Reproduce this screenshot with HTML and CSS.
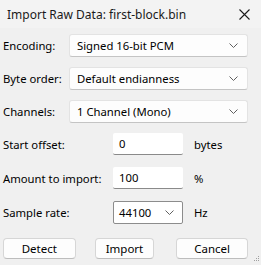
FILE: index.html
```html
<!doctype html>
<html>
  <head>
    <meta name="viewport" content="width=device-width, initial-scale=1.0" />
    <title>Import Raw Data</title>
    <link rel="stylesheet" href="styles.css">
  </head>
  <body>
    <div class="titlebar">
      <span class="title">Import Raw Data: first-block.bin</span>
      <svg class="close" width="11" height="11" viewBox="0 0 11 11">
        <path d="M0.5 0.5 L10.5 10.5 M10.5 0.5 L0.5 10.5" stroke="#1a1a1a" stroke-width="1.1" fill="none" />
      </svg>
    </div>

    <div class="content">
      <div class="row combo-row">
        <label class="label">Encoding:</label>
        <div class="combo">
          <span>Signed 16-bit PCM</span>
          <svg class="chev" width="9" height="5" viewBox="0 0 9 5"><path d="M0.5 0.5 L4.5 4.5 L8.5 0.5" stroke="#606060" fill="none" /></svg>
        </div>
      </div>
      <div class="row combo-row">
        <label class="label">Byte order:</label>
        <div class="combo">
          <span>Default endianness</span>
          <svg class="chev" width="9" height="5" viewBox="0 0 9 5"><path d="M0.5 0.5 L4.5 4.5 L8.5 0.5" stroke="#606060" fill="none" /></svg>
        </div>
      </div>
      <div class="row combo-row">
        <label class="label">Channels:</label>
        <div class="combo">
          <span>1 Channel (Mono)</span>
          <svg class="chev" width="9" height="5" viewBox="0 0 9 5"><path d="M0.5 0.5 L4.5 4.5 L8.5 0.5" stroke="#606060" fill="none" /></svg>
        </div>
      </div>

      <div class="row field-row">
        <label class="label wide">Start offset:</label>
        <div class="edit">0</div>
        <span class="unit">bytes</span>
      </div>
      <div class="row field-row">
        <label class="label wide">Amount to import:</label>
        <div class="edit">100</div>
        <span class="unit">%</span>
      </div>
      <div class="row field-row rate-row">
        <label class="label wide">Sample rate:</label>
        <div class="edit rate">
          <span>44100</span>
          <svg class="chev" width="9" height="5" viewBox="0 0 9 5"><path d="M0.5 0.5 L4.5 4.5 L8.5 0.5" stroke="#606060" fill="none" /></svg>
        </div>
        <span class="unit">Hz</span>
      </div>

      <div class="buttons">
        <button class="btn detect">Detect</button>
        <button class="btn import">Import</button>
        <button class="btn cancel">Cancel</button>
      </div>
    </div>

    <svg class="grip" width="6" height="6" viewBox="0 0 6 6">
      <rect x="4" y="0" width="1" height="1" fill="#a0a0a0" />
      <rect x="2" y="2" width="1" height="1" fill="#a0a0a0" />
      <rect x="4" y="2" width="1" height="1" fill="#a0a0a0" />
      <rect x="0" y="4" width="1" height="1" fill="#a0a0a0" />
      <rect x="2" y="4" width="1" height="1" fill="#a0a0a0" />
      <rect x="4" y="4" width="1" height="1" fill="#a0a0a0" />
    </svg>
  </body>
</html>
```

FILE: styles.css
```css
html,
body {
  margin: 0;
  height: 100%;
  background: #f0f0f0;
  color: #000;
  font-family: 'Noto Sans', 'Open Sans', sans-serif;
  font-size: 11.3px;
}

body {
  position: relative;
  width: 261px;
  height: 265px;
  overflow: hidden;
}

.titlebar {
  height: 28px;
  background: #f3f3f3;
  display: flex;
  align-items: center;
  justify-content: space-between;
  padding: 0 11px 0 7px;
  color: #1a1a1a;
}

.title {
  font-size: 12px;
}

.close {
  margin-top: 1px;
}

.content {
  padding: 6px 13px 0 3px;
}

.row {
  display: flex;
  align-items: center;
}

.combo-row {
  height: 23px;
  margin-bottom: 10px;
}

.label {
  width: 66px;
  flex: none;
}

.label.wide {
  width: 110px;
}

.combo {
  flex: 1;
  box-sizing: border-box;
  height: 23px;
  background: #fdfdfd;
  border: 1px solid #e3e3e3;
  border-bottom-color: #c4c4c4;
  border-radius: 3px;
  display: flex;
  align-items: center;
  justify-content: space-between;
  padding: 0 9px 0 7px;
}

.chev {
  flex: none;
}

.field-row {
  height: 22px;
  margin-bottom: 12px;
}

.edit {
  width: 70px;
  height: 22px;
  box-sizing: border-box;
  background: #fff;
  border-bottom: 1px solid #8a8a8a;
  border-radius: 2px;
  display: flex;
  align-items: center;
  padding: 0 6px;
  flex: none;
}

.edit.rate {
  height: 23px;
  border: 1px solid #8c8c8c;
  justify-content: space-between;
  padding: 0 8px 0 5px;
}

.rate-row {
  height: 23px;
  margin-bottom: 14px;
}

.unit {
  margin-left: 11px;
}

.buttons {
  display: flex;
}

.btn {
  height: 21px;
  box-sizing: border-box;
  background: #fdfdfd;
  border: 1px solid #d6d6d6;
  border-bottom-color: #bdbdbd;
  border-radius: 4px;
  font-family: inherit;
  font-size: 11.5px;
  color: #000;
  padding: 0;
}

.detect {
  width: 73px;
}

.import {
  width: 60px;
  margin-left: 19px;
}

.cancel {
  width: 72px;
  margin-left: 22px;
}

.grip {
  position: absolute;
  right: 1px;
  bottom: 3px;
}
```
